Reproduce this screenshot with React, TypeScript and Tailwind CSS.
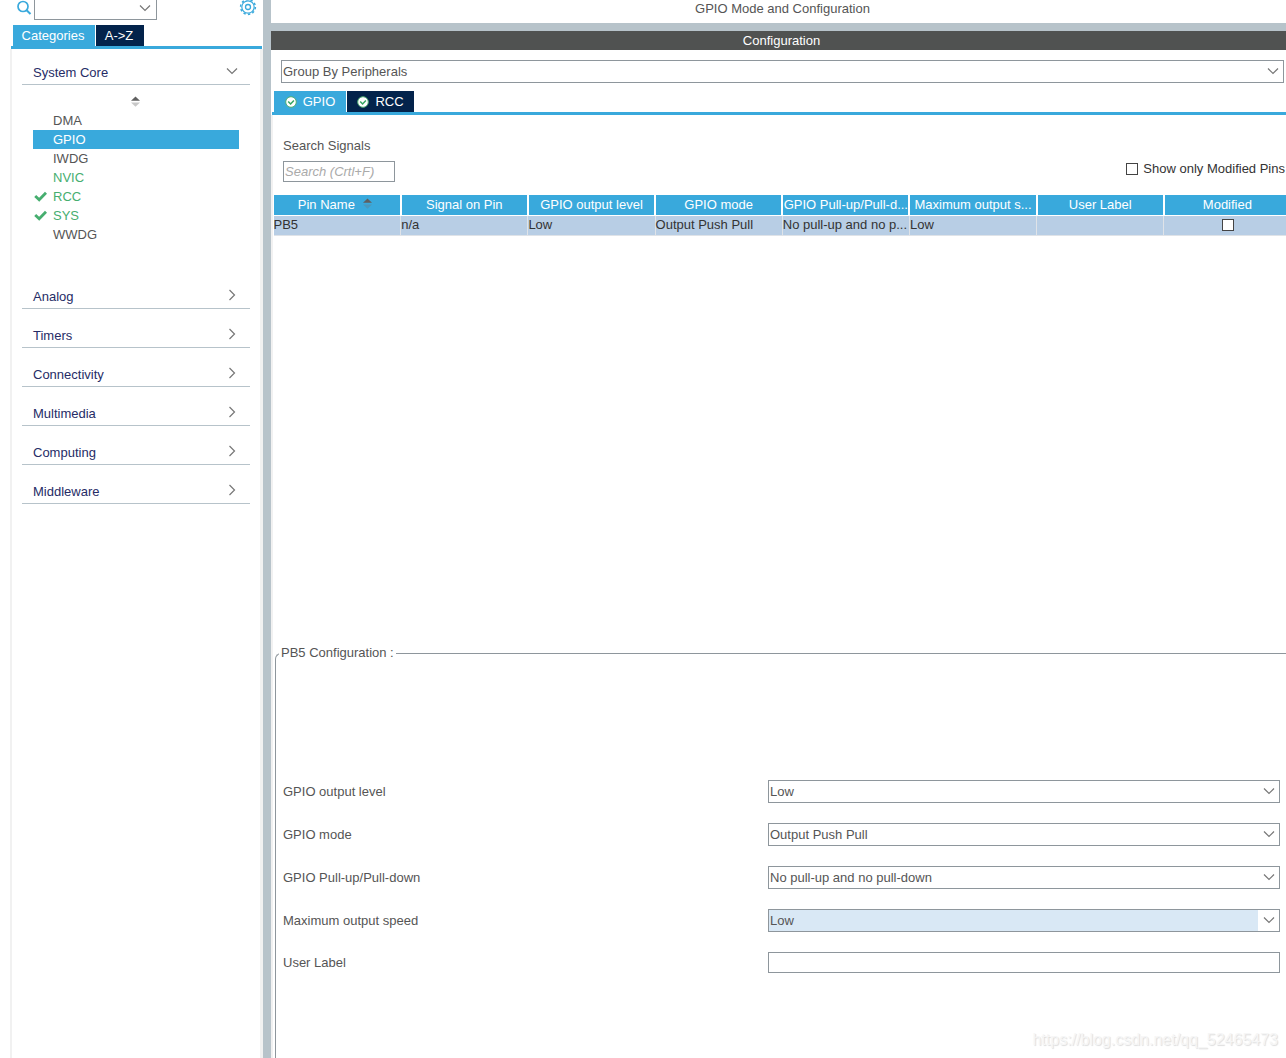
import { useState } from "react";
import clsx from "clsx";

const peripherals = [
  { name: "DMA" },
  { name: "GPIO", selected: true },
  { name: "IWDG" },
  { name: "NVIC", active: true },
  { name: "RCC", active: true, checked: true },
  { name: "SYS", active: true, checked: true },
  { name: "WWDG" },
];

const sections = ["Analog", "Timers", "Connectivity", "Multimedia", "Computing", "Middleware"];

const columns = [
  "Pin Name",
  "Signal on Pin",
  "GPIO output level",
  "GPIO mode",
  "GPIO Pull-up/Pull-d...",
  "Maximum output s...",
  "User Label",
  "Modified",
];

const pinRow = ["PB5", "n/a", "Low", "Output Push Pull", "No pull-up and no p...", "Low", ""];

const settings = [
  { id: "level", label: "GPIO output level", options: ["Low", "High"] },
  { id: "mode", label: "GPIO mode", options: ["Output Push Pull", "Output Open Drain"] },
  { id: "pull", label: "GPIO Pull-up/Pull-down", options: ["No pull-up and no pull-down", "Pull-up", "Pull-down"] },
  { id: "speed", label: "Maximum output speed", options: ["Low", "Medium", "High"], focused: true },
];

function Chevron({ className }: { className?: string }) {
  return (
    <svg viewBox="0 0 12 12" fill="none" stroke="#777" strokeWidth="1.2" className={clsx("size-3 shrink-0", className)}>
      <path d="M1 3.500l5 5 5-5" />
    </svg>
  );
}

function SearchIcon() {
  return (
    <svg viewBox="0 0 16 16" fill="none" stroke="#39a9dc" className="size-4 shrink-0">
      <circle cx="7" cy="6.500" r="5" strokeWidth="1.7" />
      <path d="M10.600 10.200L14.500 14" strokeWidth="2" />
    </svg>
  );
}

function GearIcon() {
  return (
    <svg viewBox="0 0 18 18" fill="none" stroke="#39a9dc" className="size-[18px]">
      <circle cx="9" cy="9" r="7.400" strokeWidth="1.500" strokeDasharray="2.325 2.325" />
      <circle cx="9" cy="9" r="6.200" strokeWidth="1.200" />
      <circle cx="9" cy="9" r="2.500" strokeWidth="1.300" />
    </svg>
  );
}

function StatusIcon() {
  return (
    <svg viewBox="0 0 12 12" className="size-3">
      <circle cx="6" cy="6" r="5.300" fill="#fff" stroke="#4fae73" strokeWidth="1" />
      <path d="M3.200 5.500l2.400 2.500 3.300-3.500" fill="none" stroke="#35a561" strokeWidth="1.500" />
    </svg>
  );
}

function TickIcon() {
  return (
    <svg viewBox="0 0 13 11" fill="none" stroke="#46ae6f" strokeWidth="2.800" className="h-[11px] w-[13px]">
      <path d="M1.200 5l4 3.800L12 1.800" />
    </svg>
  );
}

function SortIcon({ lower, className }: { lower: string; className?: string }) {
  return (
    <svg viewBox="0 0 9 11" className={clsx("h-[11px] w-[9px]", className)}>
      <path d="M0 4.800L4.500 0.500 9 4.800z" fill="#606060" />
      <path d="M0 6.500L4.500 10.800 9 6.500z" fill={lower} />
    </svg>
  );
}

type SelectBoxProps = {
  id: string;
  label?: string;
  options: string[];
  focused?: boolean;
};

function SelectBox({ id, label, options, focused }: SelectBoxProps) {
  return (
    <div className="relative h-[23px] w-full border border-[#8e969c] bg-white">
      <select
        id={id}
        aria-label={label}
        className={clsx(
          "block h-full w-full appearance-none border-r-[21px] border-white px-px outline-none",
          focused ? "bg-[#d9e8f5]" : "bg-white",
        )}
      >
        {options.map((option) => (
          <option key={option}>{option}</option>
        ))}
      </select>
      <Chevron className="pointer-events-none absolute top-1 right-1" />
    </div>
  );
}

function Sidebar() {
  return (
    <aside className="flex w-[263px] shrink-0 flex-col">
      <div className="flex h-[25px] items-start pl-4">
        <SearchIcon />
        <div className="relative ml-0.5 h-5 w-[123px] border border-t-0 border-[#8e969c]">
          <input aria-label="Search peripherals" className="block h-full w-full pl-1 outline-none" />
          <Chevron className="pointer-events-none absolute top-0.5 right-[5px]" />
        </div>
        <button aria-label="Settings" className="-mt-0.5 ml-auto pr-1.5">
          <GearIcon />
        </button>
      </div>
      <div className="mr-px ml-[11px] flex h-6 gap-px border-b-3 border-[#39a9dc] pl-0.5 text-white">
        <button className="w-[82px] bg-[#39a9dc] pr-0.5">Categories</button>
        <button className="w-12 bg-[#03234b] pr-0.5">A-&gt;Z</button>
      </div>
      <div className="ml-2.5 flex-1 border-r-3 border-l-2 border-[#f1f1f1] px-2.5">
        <button className="flex h-9 w-full items-center justify-between border-b border-[#b7c3ca] pt-3 pr-3 pl-[11px] text-[#262c66]">
          System Core
          <Chevron className="mb-1" />
        </button>
        <div className="flex h-[26px] justify-center pt-[11px] pr-0.5">
          <SortIcon lower="#c8c8c8" />
        </div>
        <ul className="mx-[11px]">
          {peripherals.map((item) => (
            <li key={item.name}>
              <button
                className={clsx(
                  "flex h-[19px] w-full items-center",
                  item.selected && "bg-[#39a9dc] text-white",
                  item.active && "text-[#46ae6f]",
                )}
              >
                <span className="flex w-5 items-center pl-px">{item.checked && <TickIcon />}</span>
                {item.name}
              </button>
            </li>
          ))}
        </ul>
        <div className="pt-[26px]">
          {sections.map((section) => (
            <button
              key={section}
              className="flex h-[39px] w-full items-center justify-between border-b border-[#b7c3ca] pt-4 pr-3 pl-[11px] text-[#262c66]"
            >
              {section}
              <Chevron className="mb-1 -rotate-90" />
            </button>
          ))}
        </div>
      </div>
    </aside>
  );
}

function PinTable() {
  return (
    <div className="overflow-hidden">
      <table className="w-[calc(100%+6px)] table-fixed border-collapse">
        <thead>
          <tr className="h-5 text-white">
            {columns.map((column, index) => (
              <th
                key={column}
                className="border-x-2 border-b border-white bg-[#39a9dc] p-0 text-center font-normal whitespace-nowrap first:border-l"
              >
                {column}
                {index === 0 && <SortIcon lower="#4a98bd" className="mr-1 mb-1 ml-2 inline" />}
              </th>
            ))}
          </tr>
        </thead>
        <tbody>
          <tr className="h-5 bg-[#b8cee5] text-[#333]">
            {pinRow.map((value, index) => (
              <td key={index} className="border-r border-b border-[#dfe3e8] p-0 whitespace-nowrap">
                {value}
              </td>
            ))}
            <td className="border-b border-[#dfe3e8] p-0">
              <input
                type="checkbox"
                aria-label="PB5 modified"
                className="mx-auto block size-3 appearance-none border border-[#444] bg-white"
              />
            </td>
          </tr>
        </tbody>
      </table>
    </div>
  );
}

export default function App() {
  const [label, setLabel] = useState("");

  return (
    <div className="relative flex min-h-screen overflow-hidden bg-white font-['Liberation_Sans',Arial,sans-serif] text-[13px] leading-4 text-[#555]">
      <Sidebar />
      <div className="w-2 shrink-0 bg-[#b7c3ca]" />
      <main className="flex min-w-0 flex-1 flex-col">
        <h1 className="h-[31px] border-b-8 border-[#b7c3ca] pt-px pl-2 text-center">GPIO Mode and Configuration</h1>
        <h2 className="h-[19px] bg-[#505251] pt-0.5 pl-1.5 text-center text-white">Configuration</h2>
        <div className="pt-2.5 pr-0.5 pb-2 pl-2.5">
          <SelectBox id="group" label="Group" options={["Group By Peripherals", "Group By IP"]} />
        </div>
        <div className="ml-px flex h-6 gap-px border-b-3 border-[#39a9dc] pl-0.5 text-white">
          <button className="flex w-[72px] items-center justify-center gap-1.5 bg-[#39a9dc]">
            <StatusIcon /> GPIO
          </button>
          <button className="flex w-[67px] items-center justify-center gap-1.5 bg-[#03234b]">
            <StatusIcon /> RCC
          </button>
        </div>
        <div className="flex flex-1 flex-col border-l-2 border-[#f1f1f1]">
          <div className="flex justify-between pt-[23px] pl-2.5">
            <label className="flex flex-col gap-[7px]">
              Search Signals
              <input
                placeholder="Search (Crtl+F)"
                className="h-[21px] w-28 border border-[#8e969c] px-px outline-none placeholder:text-[#aaa] placeholder:italic"
              />
            </label>
            <label className="flex items-center gap-[5px] self-end pr-px pb-[5px] text-[#333]">
              <input type="checkbox" className="size-3 appearance-none border border-[#444] bg-white" />
              Show only Modified Pins
            </label>
          </div>
          <div className="h-[463px] pt-[13px]">
            <PinTable />
          </div>
          <fieldset className="ml-0.5 flex-1 rounded-tl-md border-t border-l border-[#8e969c] pr-1.5 pl-[7px]">
            <legend className="-ml-1 px-0.5">PB5 Configuration :</legend>
            <div className="flex flex-col gap-5 pt-[119px]">
              {settings.map((setting) => (
                <div key={setting.id} className="grid grid-cols-[485fr_512fr] items-center">
                  <label htmlFor={setting.id}>{setting.label}</label>
                  <SelectBox id={setting.id} options={setting.options} focused={setting.focused} />
                </div>
              ))}
              <div className="grid grid-cols-[485fr_512fr] items-center">
                <label htmlFor="user-label">User Label</label>
                <input
                  id="user-label"
                  value={label}
                  onChange={(event) => setLabel(event.target.value)}
                  className="h-[21px] w-full border border-[#8e969c] px-px outline-none"
                />
              </div>
            </div>
          </fieldset>
        </div>
      </main>
      <p className="pointer-events-none absolute right-2 bottom-2 text-base leading-5 text-[#f6f6f6] [text-shadow:1px_1px_1px_#dcdcdc]">
        https://blog.csdn.net/qq_52465473
      </p>
    </div>
  );
}
